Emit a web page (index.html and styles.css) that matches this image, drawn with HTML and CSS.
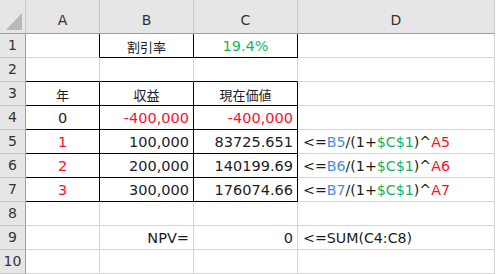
FILE: index.html
```html
<!DOCTYPE html>
<html lang="ja">
<head>
<meta charset="utf-8">
<link rel="stylesheet" href="styles.css">
</head>
<body>
<div class="sheet">
  <div class="hd corner"><svg class="tri" width="26" height="34" viewBox="0 0 26 34"><polygon points="6,30 22,30 22,13" fill="#b8b8b8"/></svg></div>
  <div class="hd col">A</div>
  <div class="hd col">B</div>
  <div class="hd col">C</div>
  <div class="hd col last">D</div>

  <div class="hd row">1</div>
  <div class="c rb"></div>
  <div class="c ctr rb bb"><span class="jp">割引率</span></div>
  <div class="c ctr green rb bb">19.4%</div>
  <div class="c"></div>

  <div class="hd row">2</div>
  <div class="c bb"></div>
  <div class="c bb"></div>
  <div class="c bb"></div>
  <div class="c"></div>

  <div class="hd row">3</div>
  <div class="c ctr rb bb"><span class="jp">年</span></div>
  <div class="c ctr rb bb"><span class="jp">収益</span></div>
  <div class="c ctr rb bb"><span class="jp">現在価値</span></div>
  <div class="c"></div>

  <div class="hd row">4</div>
  <div class="c ctr rb bb">0</div>
  <div class="c num red rb bb">-400,000</div>
  <div class="c num red rb bb">-400,000</div>
  <div class="c"></div>

  <div class="hd row">5</div>
  <div class="c ctr red rb bb">1</div>
  <div class="c num rb bb">100,000</div>
  <div class="c num rb bb">83725.651</div>
  <div class="c txt">&lt;=<span class="blue">B5</span>/(1+<span class="green">$C$1</span>)^<span class="red">A5</span></div>

  <div class="hd row">6</div>
  <div class="c ctr red rb bb">2</div>
  <div class="c num rb bb">200,000</div>
  <div class="c num rb bb">140199.69</div>
  <div class="c txt">&lt;=<span class="blue">B6</span>/(1+<span class="green">$C$1</span>)^<span class="red">A6</span></div>

  <div class="hd row">7</div>
  <div class="c ctr red rb bb">3</div>
  <div class="c num rb bb">300,000</div>
  <div class="c num rb bb">176074.66</div>
  <div class="c txt">&lt;=<span class="blue">B7</span>/(1+<span class="green">$C$1</span>)^<span class="red">A7</span></div>

  <div class="hd row">8</div>
  <div class="c"></div>
  <div class="c"></div>
  <div class="c"></div>
  <div class="c"></div>

  <div class="hd row">9</div>
  <div class="c"></div>
  <div class="c num">NPV=</div>
  <div class="c num">0</div>
  <div class="c txt">&lt;=SUM(C4:C8)</div>

  <div class="hd row">10</div>
  <div class="c"></div>
  <div class="c"></div>
  <div class="c"></div>
  <div class="c"></div>
</div>
</body>
</html>
```
FILE: styles.css
```css
html, body {
  margin: 0;
  padding: 0;
  background: #ffffff;
}
.sheet {
  display: grid;
  grid-template-columns: 26px 74px 94px 104px 197px;
  grid-template-rows: 34px repeat(10, 24px);
  font-family: "DejaVu Sans", "Noto Sans CJK JP", sans-serif;
  font-size: 14.5px;
  color: #1c1c24;
  width: 496px;
  height: 274px;
  overflow: hidden;
}
.sheet > div {
  box-sizing: border-box;
  display: flex;
  align-items: center;
  white-space: nowrap;
  line-height: 1;
}
.jp {
  font-family: "Noto Sans CJK JP", sans-serif;
  font-size: 13px;
}
.hd {
  background: #e6e6e6;
  color: #333333;
  justify-content: center;
  font-size: 14px;
}
.hd.col {
  border-bottom: 1px solid #9e9e9e;
  border-right: 1px solid #c8c8c8;
  padding-top: 6px;
}
.hd.corner {
  border-bottom: 1px solid #9e9e9e;
  border-right: 1px solid #c8c8c8;
  position: relative;
}
.tri {
  position: absolute;
  left: 0;
  top: 0;
}
.hd.row {
  border-right: 1px solid #9e9e9e;
  border-bottom: 1px solid #c8c8c8;
  padding-bottom: 1px;
}
.c {
  border-right: 1px solid #d4d4d4;
  border-bottom: 1px solid #d4d4d4;
  padding-top: 1px;
}
.c.rb { border-right-color: #000000; }
.c.bb { border-bottom-color: #000000; }
.ctr { justify-content: center; }
.num { justify-content: flex-end; padding-right: 4px; }
.txt { justify-content: flex-start; padding-left: 5px; font-size: 14.2px; }
.red { color: #ff0d2e; }
.green { color: #16b45a; }
.blue { color: #4a8fd8; }
```
